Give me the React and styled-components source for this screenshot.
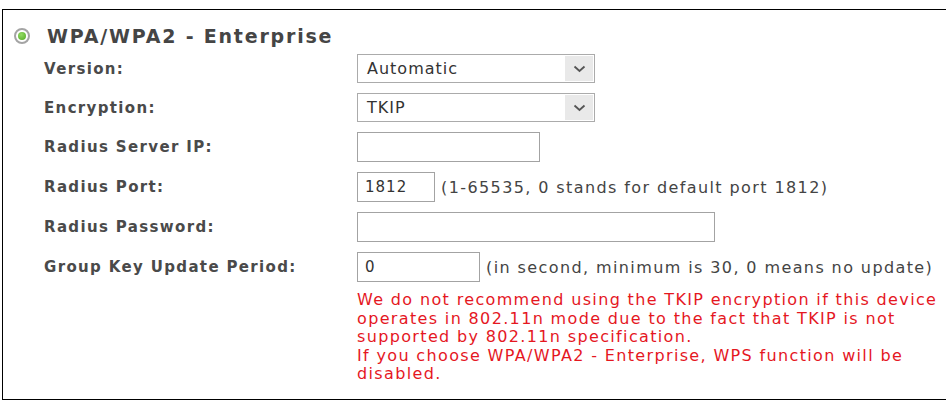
import React from "react";
import styled, { createGlobalStyle } from "styled-components";

const GlobalStyle = createGlobalStyle`
  html, body { margin: 0; padding: 0; background: #fff; }
  body { font-family: "DejaVu Sans", Verdana, sans-serif; }
`;

const Panel = styled.div`
  margin: 9px 0 0 2px;
  border-top: 1px solid #000;
  border-left: 1px solid #000;
  border-bottom: 1px solid #000;
  padding: 15px 0 8px 11px;
  height: 391px;
  box-sizing: border-box;
`;

const Header = styled.div`
  display: flex;
  align-items: center;
  gap: 17px;
  height: 22px;
`;

const Radio = styled.span`
  width: 16px;
  height: 16px;
  border-radius: 50%;
  border: 2px solid #a4a4a4;
  background: #fff;
  display: inline-flex;
  align-items: center;
  justify-content: center;
  box-sizing: border-box;
  &::after {
    content: "";
    width: 8px;
    height: 8px;
    border-radius: 50%;
    background: radial-gradient(circle at 40% 35%, #93dc64, #52a824);
  }
`;

const Title = styled.span`
  font-weight: bold;
  font-size: 19px;
  letter-spacing: 1.8px;
  color: #454545;
`;

const Form = styled.div`
  display: grid;
  grid-template-columns: 313px 1fr;
  row-gap: 10px;
  align-items: center;
  margin-top: 7px;
  padding-left: 30px;
`;

const Label = styled.div`
  font-weight: bold;
  font-size: 15px;
  letter-spacing: 1.35px;
  color: #4a4a4a;
`;

const Cell = styled.div`
  display: flex;
  align-items: center;
  gap: 6px;
`;

const SelectBox = styled.div`
  width: ${(p) => p.$w}px;
  height: 29px;
  box-sizing: border-box;
  border: 1px solid #ababab;
  background: #fff;
  display: flex;
  align-items: stretch;
  padding: 1px;
`;

const SelectValue = styled.span`
  flex: 1;
  display: flex;
  align-items: center;
  padding-left: 8px;
  font-size: 16px;
  letter-spacing: 1px;
  color: #333;
`;

const ArrowBox = styled.span`
  width: 28px;
  background: #e9e9e9;
  display: flex;
  align-items: center;
  justify-content: center;
`;

const Input = styled.div`
  width: ${(p) => p.$w}px;
  height: 30px;
  box-sizing: border-box;
  border: 1px solid #a3a3a3;
  background: #fff;
  display: flex;
  align-items: center;
  padding-left: 7px;
  font-size: 15px;
  letter-spacing: 1px;
  color: #333;
`;

const Note = styled.span`
  font-size: 16px;
  letter-spacing: 1.4px;
  color: #444;
  white-space: nowrap;
`;

const Warning = styled.div`
  grid-column: 2;
  font-size: 16px;
  letter-spacing: 1.35px;
  line-height: 18.5px;
  color: #e5171f;
  white-space: nowrap;
  margin-top: -1px;
`;

const Chevron = () => (
  <svg width="13" height="8" viewBox="0 0 13 8">
    <path d="M1.5 1.5 L6.5 6 L11.5 1.5" fill="none" stroke="#555" strokeWidth="1.8" />
  </svg>
);

const Select = ({ value, w }) => (
  <SelectBox $w={w}>
    <SelectValue>{value}</SelectValue>
    <ArrowBox>
      <Chevron />
    </ArrowBox>
  </SelectBox>
);

export default function App() {
  return (
    <>
      <GlobalStyle />
      <Panel>
        <Header>
          <Radio />
          <Title>WPA/WPA2 - Enterprise</Title>
        </Header>
        <Form>
          <Label>Version:</Label>
          <Cell>
            <Select value="Automatic" w={238} />
          </Cell>
          <Label>Encryption:</Label>
          <Cell>
            <Select value="TKIP" w={238} />
          </Cell>
          <Label>Radius Server IP:</Label>
          <Cell>
            <Input $w={183} />
          </Cell>
          <Label>Radius Port:</Label>
          <Cell>
            <Input $w={78}>1812</Input>
            <Note>(1-65535, 0 stands for default port 1812)</Note>
          </Cell>
          <Label>Radius Password:</Label>
          <Cell>
            <Input $w={358} />
          </Cell>
          <Label>Group Key Update Period:</Label>
          <Cell>
            <Input $w={123}>0</Input>
            <Note>(in second, minimum is 30, 0 means no update)</Note>
          </Cell>
          <Warning>
            We do not recommend using the TKIP encryption if this device
            <br />
            operates in 802.11n mode due to the fact that TKIP is not
            <br />
            supported by 802.11n specification.
            <br />
            If you choose WPA/WPA2 - Enterprise, WPS function will be
            <br />
            disabled.
          </Warning>
        </Form>
      </Panel>
    </>
  );
}
